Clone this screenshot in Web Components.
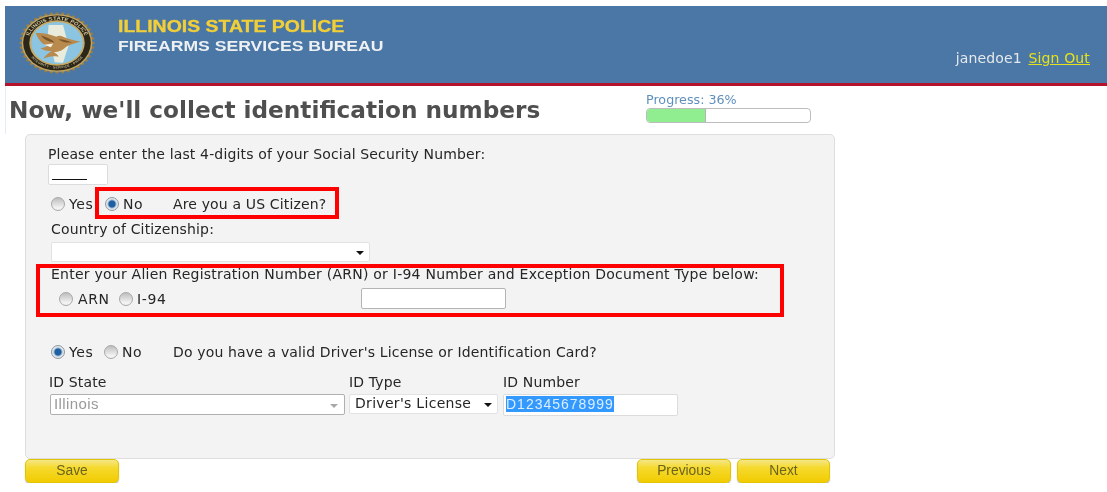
<!DOCTYPE html>
<html lang="en">
<head>
<meta charset="utf-8">
<title>Firearms Services Bureau</title>
<style>
    html, body { margin: 0; padding: 0; background: #fff; }
    body { font-family: "DejaVu Sans", sans-serif; font-size: 14px; letter-spacing: .15px; color: #262626; filter: blur(.3px); }
</style>
</head>
<body>

<isp-header user="janedoe1"></isp-header>

<page-top heading="Now, we'll collect identification numbers" percent="36"></page-top>

<form-panel>
    <form-text left="22" top="11">Please enter the last 4-digits of your Social Security Number:</form-text>
    <text-box left="22" top="1" width="60" height="21" underline></text-box>

    <radio-row left="25" top="10" height="18">
        <radio-choice gap="4" width="54">Yes</radio-choice>
        <radio-choice gap="4" width="68" checked>No</radio-choice>
        <span>Are you a US Citizen?</span>
    </radio-row>

    <form-text left="25" top="8">Country of Citizenship:</form-text>
    <select-box left="25" top="4" width="319" height="20" arrow-right="5"></select-box>

    <form-text left="25" top="4" style="letter-spacing:.24px">Enter your Alien Registration Number (ARN) or I-94 Number and Exception Document Type below:</form-text>
    <radio-row left="33" top="5" height="21">
        <radio-choice gap="5" width="60">ARN</radio-choice>
        <radio-choice gap="4" width="242">I-94</radio-choice>
        <text-box width="145" height="21"></text-box>
    </radio-row>

    <radio-row left="25" top="34" height="18">
        <radio-choice gap="4" width="53" checked>Yes</radio-choice>
        <radio-choice gap="4" width="69">No</radio-choice>
        <span>Do you have a valid Driver's License or Identification Card?</span>
    </radio-row>

    <id-row>
        <label-field label="ID State" width="300">
            <select-box left="1" width="295" height="21" muted arrow-right="6" value="Illinois"></select-box>
        </label-field>
        <label-field label="ID Type" width="154">
            <select-box width="149" height="20" arrow-right="5" value="Driver's License"></select-box>
        </label-field>
        <label-field label="ID Number" width="175">
            <text-box width="175" height="22" selected="D12345678999"></text-box>
        </label-field>
    </id-row>

    <!-- red annotation boxes drawn on top of the screenshot -->
    <mark-box left="69" top="52" width="244" height="32"></mark-box>
    <mark-box left="10" top="129" width="748" height="53"></mark-box>
</form-panel>

<button-bar>
    <gold-button width="94">Save</gold-button>
    <span style="flex:1"></span>
    <gold-button width="94">Previous</gold-button>
    <gold-button width="93">Next</gold-button>
</button-bar>

<script>
class IspSeal extends HTMLElement {
    constructor() {
        super();
        this.attachShadow({ mode: "open" });
        let dots = "";
        for (let i = 0; i < 40; i++) {
            const a = i * Math.PI / 20;
            dots += `<circle cx="${(50 + 47.5 * Math.cos(a)).toFixed(1)}" cy="${(50 + 47.5 * Math.sin(a)).toFixed(1)}" r="2.2"/>`;
        }
        this.shadowRoot.innerHTML = `
            <style>
                :host { display: block; width: 76px; height: 62px; flex: none; }
                svg { display: block; width: 100%; height: 100%; }
                text { font-family: "Liberation Sans", sans-serif; font-weight: bold; font-size: 7.6px; fill: #d8cfa8; letter-spacing: .3px; }
                .low { font-size: 5px; fill: #b9ae8a; }
            </style>
            <svg viewBox="0 0 100 100" preserveAspectRatio="none">
                <g fill="#9a7f45">${dots}</g>
                <circle cx="50" cy="50" r="46.5" fill="#c2a35f"/>
                <circle cx="50" cy="50" r="44.5" fill="#2b2618"/>
                <defs>
                    <path id="up" d="M13 64A39 39 0 1 1 87 64"/>
                    <path id="down" d="M9 56A41.500 41.500 0 0 0 91 56"/>
                </defs>
                <text text-anchor="middle"><textPath href="#up" startOffset="50%">ILLINOIS STATE POLICE</textPath></text>
                <text class="low" text-anchor="middle"><textPath href="#down" startOffset="50%">INTEGRITY · SERVICE · PRIDE</textPath></text>
                <circle cx="50" cy="50" r="36.500" fill="#c7a962"/>
                <circle cx="50" cy="50" r="34" fill="#8cc5e2"/>
                <path d="M39 21L58 21L62 40L66 52L62 66L58 82L47 81L44 66L36 52L38 35Z" fill="#e9ebdd"/>
                <path d="M22 34C30 33 40 35 49 40C52 38 55 38 58 40C64 43 73 46 81 48C74 50 67 53 62 56C58 62 52 64 46 65C49 67 51 69 52 72C44 70 38 72 32 75C35 70 39 66 43 63C37 63 32 62 28 58C33 58 36 56 37 54C31 53 26 46 22 34Z" fill="#b98a4d"/>
                <path d="M29 38C36 40 42 44 47 49C40 49 33 45 29 38ZM52 44C58 44 64 47 70 49C63 50 57 49 52 44Z" fill="#7a5429"/>
                <path d="M33 53L45 51L42 57Z" fill="#f5f1e6"/>
            </svg>
        `;
    }
}
customElements.define("isp-seal", IspSeal);

class IspHeader extends HTMLElement {
    constructor() {
        super();
        this.attachShadow({ mode: "open" });
        this.shadowRoot.innerHTML = `
            <style>
                :host {
                    display: flex;
                    box-sizing: border-box;
                    height: 80px;
                    margin: 6px 0 0 5px;
                    padding: 6px 17px 0 14px;
                    background: #4a77a5;
                    border-bottom: 3px solid #b5132b;
                }
                .titles { margin-left: 23px; padding-top: 6px; font-family: "Liberation Sans", sans-serif; font-weight: bold; letter-spacing: 0; }
                .state, .bureau { transform-origin: left; white-space: nowrap; }
                .state {
                    font-size: 16px;
                    line-height: 17px;
                    color: #f2cf38;
                    -webkit-text-stroke: .3px #f2cf38;
                    transform: scaleX(1.216);
                }
                .bureau {
                    margin-top: 3px;
                    font-size: 14.500px;
                    line-height: 17px;
                    color: #eef0f2;
                    transform: scaleX(1.213);
                }
                .user { margin-left: auto; padding-top: 38px; font-size: 14px; color: #e6e9ec; white-space: nowrap; }
                a { color: #e5e21a; text-decoration: underline; margin-left: 2px; }
            </style>
            <isp-seal></isp-seal>
            <div class="titles">
                <div class="state">ILLINOIS STATE POLICE</div>
                <div class="bureau">FIREARMS SERVICES BUREAU</div>
            </div>
            <div class="user"><span class="name"></span> <a href="#">Sign Out</a></div>
        `;
    }

    connectedCallback() {
        this.shadowRoot.querySelector(".name").textContent = this.getAttribute("user") || "";
    }
}
customElements.define("isp-header", IspHeader);

class PageTop extends HTMLElement {
    constructor() {
        super();
        this.attachShadow({ mode: "open" });
        this.shadowRoot.innerHTML = `
            <style>
                :host { display: flex; box-sizing: border-box; width: 830px; height: 48px; margin-left: 5px; border-left: 1px solid #e3edf6; }
                h1 {
                    margin: 9px 0 0 3px;
                    width: 637px;
                    font-size: 23.200px;
                    line-height: 30px;
                    font-weight: bold;
                    letter-spacing: 0;
                    color: #4f4f4f;
                    white-space: nowrap;
                }
                .progress { padding-top: 6px; width: 165px; font-size: 12.700px; letter-spacing: 0; line-height: 16px; color: #5f8fbd; }
                .track {
                    box-sizing: border-box;
                    height: 15px;
                    border: 1px solid #bdbdbd;
                    border-radius: 4px;
                    background: #fff;
                    overflow: hidden;
                }
                .fill { height: 100%; background: #90ee90; border-right: 1px solid #b5b5b5; box-sizing: border-box; }
            </style>
            <h1></h1>
            <div class="progress">
                <div class="label"></div>
                <div class="track"><div class="fill"></div></div>
            </div>
        `;
    }

    connectedCallback() {
        const percent = this.getAttribute("percent") || "0";
        this.shadowRoot.querySelector("h1").textContent = this.getAttribute("heading") || "";
        this.shadowRoot.querySelector(".label").textContent = "Progress: " + percent + "%";
        this.shadowRoot.querySelector(".fill").style.width = percent + "%";
    }
}
customElements.define("page-top", PageTop);

class FormPanel extends HTMLElement {
    constructor() {
        super();
        this.attachShadow({ mode: "open" });
        this.shadowRoot.innerHTML = `
            <style>
                :host {
                    display: block;
                    position: relative;
                    box-sizing: border-box;
                    width: 810px;
                    height: 325px;
                    margin-left: 25px;
                    background: #f3f3f3;
                    border: 1px solid #dedede;
                    border-radius: 5px;
                }
            </style>
            <slot></slot>
        `;
    }
}
customElements.define("form-panel", FormPanel);

class FormText extends HTMLElement {
    constructor() {
        super();
        this.attachShadow({ mode: "open" });
        this.shadowRoot.innerHTML = `
            <style>
                :host { display: block; line-height: 17px; white-space: nowrap; }
            </style>
            <slot></slot>
        `;
    }

    connectedCallback() {
        this.style.marginLeft = (this.getAttribute("left") || 0) + "px";
        this.style.paddingTop = (this.getAttribute("top") || 0) + "px";
    }
}
customElements.define("form-text", FormText);

class TextBox extends HTMLElement {
    constructor() {
        super();
        this.attachShadow({ mode: "open" });
        this.shadowRoot.innerHTML = `
            <style>
                :host {
                    display: block;
                    flex: none;
                    box-sizing: border-box;
                    background: #fff;
                    border: 1px solid #dcdcdc;
                    border-radius: 2px;
                    font-family: "Liberation Sans", sans-serif;
                    font-size: 14px;
                    letter-spacing: 1px;
                }
                :host([width="145"]) { border-color: #b4b4b4; }
                .line { display: none; width: 35px; margin: 14px 0 0 3px; border-top: 1px solid #111; }
                :host([underline]) .line { display: block; }
                .sel { display: none; width: max-content; margin: 1px 0 0 2px; line-height: 16px; background: #3399ff; color: #dbeeff; }
                :host([selected]) .sel { display: block; }
            </style>
            <div class="line"></div>
            <div class="sel"></div>
        `;
    }

    connectedCallback() {
        this.style.width = this.getAttribute("width") + "px";
        this.style.height = this.getAttribute("height") + "px";
        if (this.hasAttribute("left")) this.style.marginLeft = this.getAttribute("left") + "px";
        if (this.hasAttribute("top")) this.style.marginTop = this.getAttribute("top") + "px";
        this.shadowRoot.querySelector(".sel").textContent = this.getAttribute("selected") || "";
    }
}
customElements.define("text-box", TextBox);

class SelectBox extends HTMLElement {
    constructor() {
        super();
        this.attachShadow({ mode: "open" });
        this.shadowRoot.innerHTML = `
            <style>
                :host {
                    display: flex;
                    align-items: center;
                    box-sizing: border-box;
                    padding: 0 5px 2px;
                    background: #fff;
                    border: 1px solid #e2e2e2;
                    border-radius: 2px;
                    letter-spacing: .3px;
                    white-space: nowrap;
                }
                :host([muted]) {
                    border-color: #b0b0b0;
                    padding-left: 3px;
                    font-family: "Liberation Sans", sans-serif;
                    font-size: 15px;
                    letter-spacing: .4px;
                    color: #9a9a9a;
                }
                .arrow {
                    margin-left: auto;
                    width: 0;
                    height: 0;
                    border: 4.5px solid transparent;
                    border-top: 4.5px solid #111;
                    border-bottom: 0;
                    transform: translateY(2px);
                }
                :host([muted]) .arrow { border-top-color: #a8a8a8; }
            </style>
            <span class="value"></span>
            <span class="arrow"></span>
        `;
    }

    connectedCallback() {
        this.style.width = this.getAttribute("width") + "px";
        this.style.height = this.getAttribute("height") + "px";
        if (this.hasAttribute("left")) this.style.marginLeft = this.getAttribute("left") + "px";
        if (this.hasAttribute("top")) this.style.marginTop = this.getAttribute("top") + "px";
        this.style.paddingRight = (this.getAttribute("arrow-right") || 5) + "px";
        this.shadowRoot.querySelector(".value").textContent = this.getAttribute("value") || "";
    }
}
customElements.define("select-box", SelectBox);

class RadioRow extends HTMLElement {
    constructor() {
        super();
        this.attachShadow({ mode: "open" });
        this.shadowRoot.innerHTML = `
            <style>
                :host { display: flex; align-items: center; white-space: nowrap; }
            </style>
            <slot></slot>
        `;
    }

    connectedCallback() {
        this.style.marginLeft = (this.getAttribute("left") || 0) + "px";
        this.style.marginTop = (this.getAttribute("top") || 0) + "px";
        this.style.height = (this.getAttribute("height") || 18) + "px";
    }
}
customElements.define("radio-row", RadioRow);

class RadioChoice extends HTMLElement {
    constructor() {
        super();
        this.attachShadow({ mode: "open" });
        this.shadowRoot.innerHTML = `
            <style>
                :host { display: flex; align-items: center; flex: none; }
                .dot {
                    box-sizing: border-box;
                    width: 14px;
                    height: 14px;
                    flex: none;
                    border: 1px solid #a8a8a8;
                    border-radius: 50%;
                    background: linear-gradient(#bdbdbd, #f2f2f2 80%);
                }
                :host([checked]) .dot { background: radial-gradient(circle, #1f5f9f 0 3px, #8fb6d8 4px, #e6e6e6 5px); border-color: #8a98a6; }
                .txt { letter-spacing: .6px; }
            </style>
            <span class="dot"></span>
            <span class="txt"><slot></slot></span>
        `;
    }

    connectedCallback() {
        this.shadowRoot.querySelector(".txt").style.marginLeft = (this.getAttribute("gap") || 4) + "px";
        this.style.width = this.getAttribute("width") + "px";
    }
}
customElements.define("radio-choice", RadioChoice);

class IdRow extends HTMLElement {
    constructor() {
        super();
        this.attachShadow({ mode: "open" });
        this.shadowRoot.innerHTML = `
            <style>
                :host { display: flex; margin: 13px 0 0 23px; }
            </style>
            <slot></slot>
        `;
    }
}
customElements.define("id-row", IdRow);

class LabelField extends HTMLElement {
    constructor() {
        super();
        this.attachShadow({ mode: "open" });
        this.shadowRoot.innerHTML = `
            <style>
                :host { display: block; flex: none; }
                .lbl { line-height: 17px; margin-bottom: 3px; white-space: nowrap; }
            </style>
            <div class="lbl"></div>
            <slot></slot>
        `;
    }

    connectedCallback() {
        this.shadowRoot.querySelector(".lbl").textContent = this.getAttribute("label") || "";
        this.style.width = this.getAttribute("width") + "px";
    }
}
customElements.define("label-field", LabelField);

class MarkBox extends HTMLElement {
    constructor() {
        super();
        this.attachShadow({ mode: "open" });
        this.shadowRoot.innerHTML = `
            <style>
                :host { display: block; position: absolute; box-sizing: border-box; border: 4px solid #f00; pointer-events: none; }
            </style>
        `;
    }

    connectedCallback() {
        for (const prop of ["left", "top", "width", "height"]) {
            this.style[prop] = this.getAttribute(prop) + "px";
        }
    }
}
customElements.define("mark-box", MarkBox);

class ButtonBar extends HTMLElement {
    constructor() {
        super();
        this.attachShadow({ mode: "open" });
        this.shadowRoot.innerHTML = `
            <style>
                :host { display: flex; gap: 6px; width: 805px; margin-left: 25px; }
            </style>
            <slot></slot>
        `;
    }
}
customElements.define("button-bar", ButtonBar);

class GoldButton extends HTMLElement {
    constructor() {
        super();
        this.attachShadow({ mode: "open" });
        this.shadowRoot.innerHTML = `
            <style>
                :host {
                    display: flex;
                    align-items: center;
                    justify-content: center;
                    box-sizing: border-box;
                    flex: none;
                    height: 24px;
                    padding-bottom: 2px;
                    border: 1px solid #e2c400;
                    border-radius: 5px;
                    background: linear-gradient(#f5e788 0, #f5da2e 35%, #f2cc02 100%);
                    box-shadow: 0 1px 1px #a9a9a9;
                    font-family: "Liberation Sans", sans-serif;
                    font-size: 13.800px;
                    letter-spacing: 0;
                    color: #6b6320;
                }
            </style>
            <slot></slot>
        `;
    }

    connectedCallback() {
        this.style.width = this.getAttribute("width") + "px";
    }
}
customElements.define("gold-button", GoldButton);
</script>
</body>
</html>
